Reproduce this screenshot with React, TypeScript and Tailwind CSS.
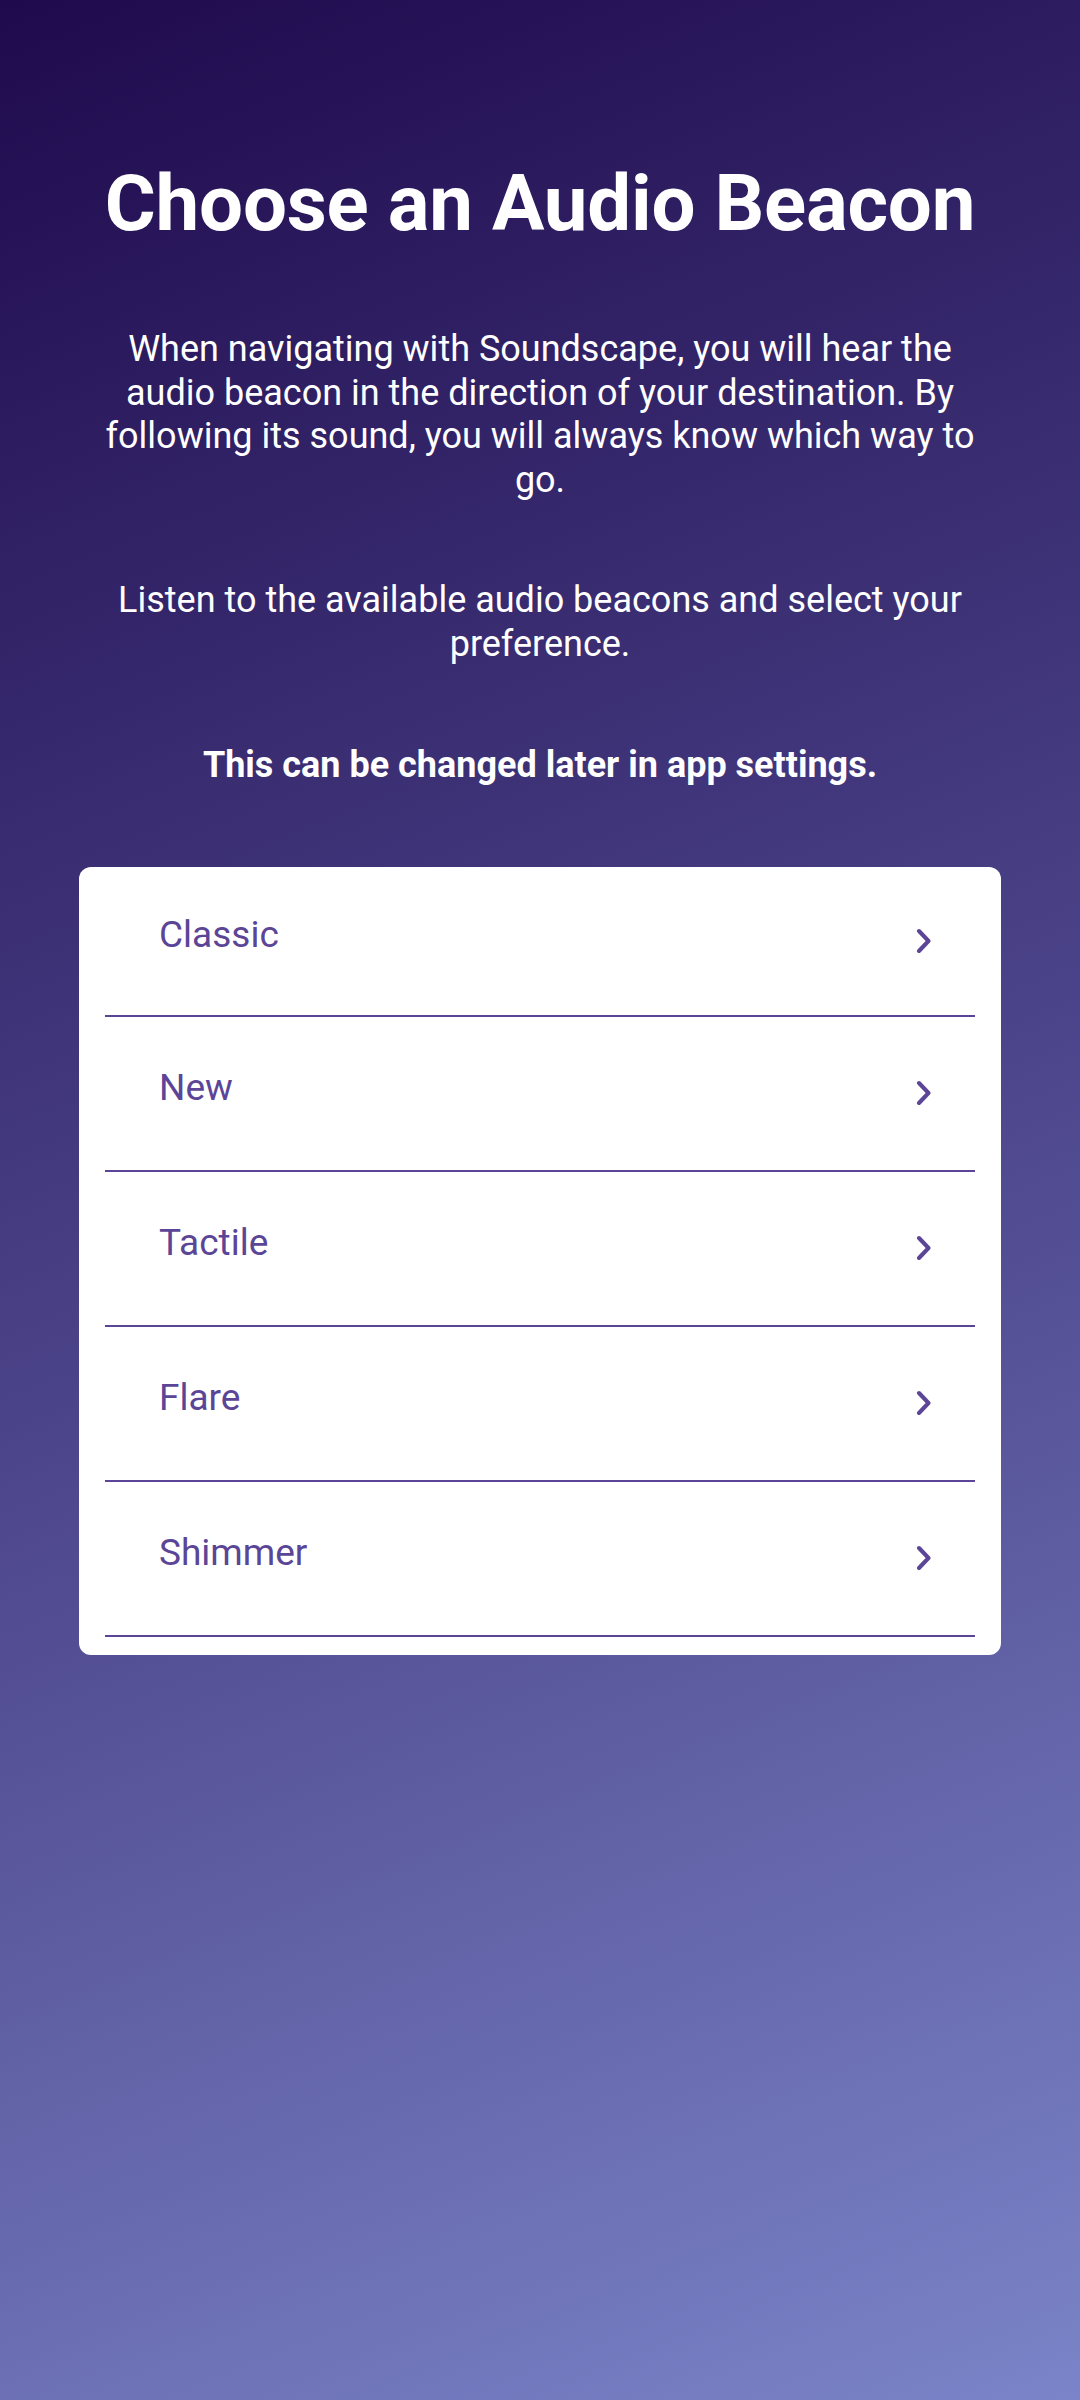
const BEACONS = ["Classic", "New", "Tactile", "Flare", "Shimmer"];

function Chevron() {
  return (
    <svg width="16" height="28" viewBox="0 0 16 28" fill="none" className="shrink-0">
      <path
        d="M4 4 L13.5 14 L4 24"
        stroke="#5b4597"
        strokeWidth="4"
        strokeLinecap="round"
        strokeLinejoin="round"
      />
    </svg>
  );
}

export default function App() {
  return (
    <div
      className="min-h-[2400px] w-full bg-[linear-gradient(158deg,#1f0a4d_0%,#4b4389_50%,#7b84c8_100%)] text-white"
      style={{ fontFamily: "Roboto, 'Noto Sans', sans-serif" }}
    >
      {/* Header */}
      <h1 className="pt-[158px] text-center text-[78px] font-bold leading-[92px] tracking-[-0.2px]">
        Choose an Audio Beacon
      </h1>

      <div className="px-[90px] text-center text-[36px] leading-[43.5px]">
        <p className="mt-[78px]">
          When navigating with Soundscape, you will hear the audio beacon in the direction of your
          destination. By following its sound, you will always know which way to go.
        </p>
        <p className="mt-[77px]">
          Listen to the available audio beacons and select your preference.
        </p>
        <p className="mt-[78px] font-bold">This can be changed later in app settings.</p>
      </div>

      {/* Beacon list */}
      <div className="mx-[79px] mt-[79px] rounded-[12px] bg-white px-[26px] pb-[18px]">
        {BEACONS.map((name, i) => (
          <button
            key={name}
            className={`flex w-full items-center justify-between border-b-2 border-[#5b4597] pl-[54px] pr-[44px] text-left ${
              i === 0 ? "h-[150px]" : "h-[155px]"
            }`}
          >
            <span className="mb-[11px] text-[37px] text-[#5b4597]">{name}</span>
            <Chevron />
          </button>
        ))}
      </div>
    </div>
  );
}
